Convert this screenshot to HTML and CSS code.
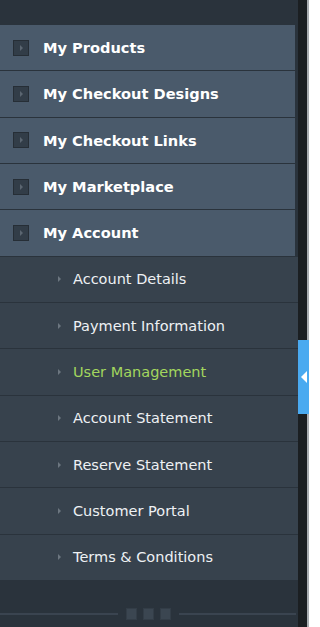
FILE: index.html
```html
<!DOCTYPE html>
<html>
<head>
<meta charset="utf-8">
<link rel="stylesheet" href="styles.css">
</head>
<body>
<div class="frame">
  <nav class="sidebar">
    <div class="top"></div>
    <ul class="menu">
      <li class="item"><span class="box"></span><span class="label">My Products</span></li>
      <li class="item"><span class="box"></span><span class="label">My Checkout Designs</span></li>
      <li class="item"><span class="box"></span><span class="label">My Checkout Links</span></li>
      <li class="item"><span class="box"></span><span class="label">My Marketplace</span></li>
      <li class="item"><span class="box"></span><span class="label">My Account</span></li>
    </ul>
    <ul class="sub">
      <li class="subitem"><span class="bullet"></span>Account Details</li>
      <li class="subitem"><span class="bullet"></span>Payment Information</li>
      <li class="subitem active"><span class="bullet"></span>User Management</li>
      <li class="subitem"><span class="bullet"></span>Account Statement</li>
      <li class="subitem"><span class="bullet"></span>Reserve Statement</li>
      <li class="subitem"><span class="bullet"></span>Customer Portal</li>
      <li class="subitem"><span class="bullet"></span>Terms &amp; Conditions</li>
    </ul>
    <div class="foot">
      <span class="rule"></span>
      <span class="dots"><i></i><i></i><i></i></span>
      <span class="rule"></span>
    </div>
  </nav>
  <div class="rail"></div>
  <div class="edge"></div>
  <div class="tab"><span class="arrow"></span></div>
</div>
</body>
</html>
```

FILE: styles.css
```css
html, body {
  margin: 0;
  padding: 0;
  background: #ffffff;
}
.frame {
  position: relative;
  display: flex;
  height: 627px;
  width: 320px;
  overflow: hidden;
}
.sidebar {
  width: 298px;
  display: flex;
  flex-direction: column;
  background: #2a333c;
}
.top {
  height: 25px;
  flex: none;
}
.menu, .sub {
  list-style: none;
  margin: 0;
  padding: 0;
}
.item {
  width: 295px;
  height: 45.33px;
  border-bottom: 1px solid #2a333c;
  background: #4a5a6b;
  display: flex;
  align-items: center;
  font-family: "DejaVu Sans", Verdana, sans-serif;
  font-weight: bold;
  font-size: 14.6px;
  color: #ffffff;
}
.box {
  width: 14px;
  height: 14px;
  margin-left: 13px;
  margin-right: 14px;
  background: #323d48;
  border: 1px solid #262e36;
  position: relative;
  flex: none;
}
.box::after {
  content: "";
  position: absolute;
  left: 6px;
  top: 4px;
  border-left: 3px solid #5b6671;
  border-top: 3px solid transparent;
  border-bottom: 3px solid transparent;
}
.subitem {
  height: 45.33px;
  border-bottom: 1px solid #2a333c;
  background: #37424d;
  display: flex;
  align-items: center;
  font-family: "DejaVu Sans", Verdana, sans-serif;
  font-size: 14.5px;
  color: #eef1f4;
}
.subitem.active {
  color: #a3d65e;
}
.bullet {
  width: 0;
  height: 0;
  margin-left: 58px;
  margin-right: 12px;
  border-left: 3px solid #6c7680;
  border-top: 3px solid transparent;
  border-bottom: 3px solid transparent;
}
.foot {
  flex: 1;
  display: flex;
  align-items: flex-start;
  padding-top: 27px;
  box-sizing: border-box;
}
.rule {
  flex: 1;
  height: 2px;
  margin-top: 5px;
  background: #3a4450;
}
.rule:last-child {
  margin-right: 2px;
}
.dots {
  display: flex;
  gap: 6px;
  margin: 0 8px;
}
.dots i {
  display: block;
  width: 9px;
  height: 10px;
  background: #3b4651;
  border: 1px solid #333d47;
}
.rail {
  width: 9px;
  background: #1b1f22;
}
.edge {
  width: 2px;
  background: #a9adb1;
}
.tab {
  position: absolute;
  left: 298px;
  top: 340px;
  width: 11px;
  height: 74px;
  background: #4aaaf0;
}
.arrow {
  position: absolute;
  left: 3px;
  top: 31px;
  border-right: 6px solid #ffffff;
  border-top: 6px solid transparent;
  border-bottom: 6px solid transparent;
}
```
